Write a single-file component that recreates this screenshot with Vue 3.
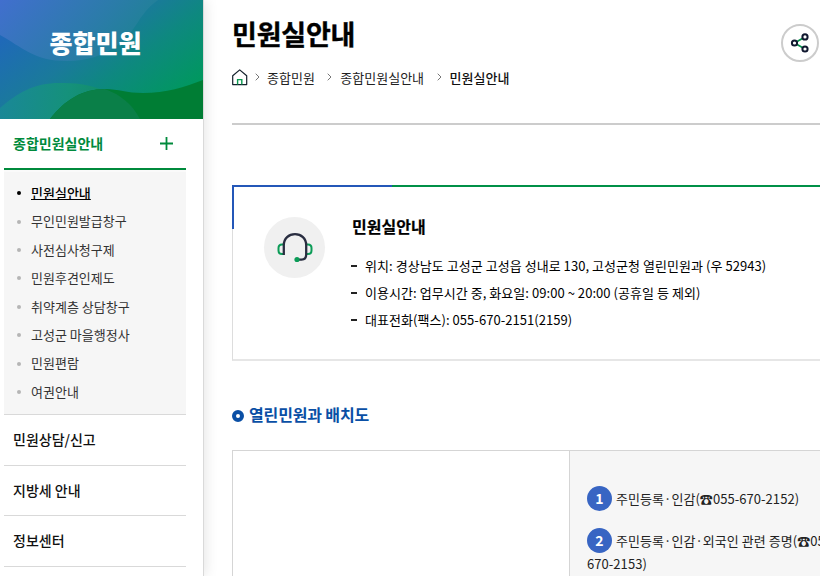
<script setup>
import { ref } from 'vue'

const subMenus = ref([
  '민원실안내',
  '무인민원발급창구',
  '사전심사청구제',
  '민원후견인제도',
  '취약계층 상담창구',
  '고성군 마을행정사',
  '민원편람',
  '여권안내'
])
const menus = ref(['민원상담/신고', '지방세 안내', '정보센터'])
const current = ref('민원실안내')
const opened = ref(true)

const crumbs = ['종합민원', '종합민원실안내', '민원실안내']

const infos = [
  '위치: 경상남도 고성군 고성읍 성내로 130, 고성군청 열린민원과 (우 52943)',
  '이용시간: 업무시간 중, 화요일: 09:00 ~ 20:00 (공휴일 등 제외)',
  '대표전화(팩스): 055-670-2151(2159)'
]

const desks = [
  { name: '주민등록·인감', tel: '055-670-2152' },
  { name: '주민등록·인감·외국인 관련 증명', tel: '055-670-2153' }
]
</script>

<template>
  <div class="page">
    <aside class="side">
      <div class="banner">
        <svg class="waves" viewBox="0 0 203 119" preserveAspectRatio="none">
          <defs>
            <linearGradient id="base" gradientUnits="userSpaceOnUse" x1="0" y1="0" x2="109" y2="100">
              <stop offset="0" stop-color="#416fce" />
              <stop offset="0.6" stop-color="#2a7ca8" />
              <stop offset="1" stop-color="#1a858b" />
            </linearGradient>
            <linearGradient id="left" gradientUnits="userSpaceOnUse" x1="0" y1="0" x2="109" y2="146">
              <stop offset="0.18" stop-color="#1f69b8" />
              <stop offset="0.5" stop-color="#1a7a9b" />
              <stop offset="0.7" stop-color="#0e8880" />
              <stop offset="1" stop-color="#019760" />
            </linearGradient>
            <linearGradient id="hill" gradientUnits="userSpaceOnUse" x1="0" y1="90" x2="130" y2="119">
              <stop offset="0" stop-color="#1a8799" />
              <stop offset="0.5" stop-color="#15917b" />
              <stop offset="1" stop-color="#0e8a5a" />
            </linearGradient>
          </defs>
          <rect width="203" height="119" fill="url(#base)" />
          <path d="M0 35C22 47 34 61 67 61C108 61 128 38 138 22C145 11 151 5 158 0H203V119H0Z" fill="url(#left)" />
          <path d="M0 108C18 93 33 83 60 83C94 82 121 94 140 119H0Z" fill="url(#hill)" />
          <path d="M50 119C65 100 82 89 105 89C119 89 126 93 143 93C166 93 185 87 203 80V119Z" fill="#007d34" />
          <path d="M50 119C65 100 82 89 105 89C121 95 132 104 140 119Z" fill="#0a7f48" />
        </svg>
        <h2>종합민원</h2>
      </div>
      <nav class="menu">
        <button class="menu-open" @click="opened = !opened">
          <span>종합민원실안내</span>
          <svg width="13" height="13" viewBox="0 0 13 13">
            <path d="M6.5 0V13M0 6.5H13" stroke="#008a3c" stroke-width="1.8" />
          </svg>
        </button>
        <ul v-if="opened" class="sub">
          <li v-for="item in subMenus" :key="item" :class="{ on: item === current }" @click="current = item">
            <span>{{ item }}</span>
          </li>
        </ul>
        <a v-for="item in menus" :key="item" class="menu-item">{{ item }}</a>
      </nav>
    </aside>

    <main>
      <header>
        <div class="head-text">
          <h1>민원실안내</h1>
          <div class="crumbs">
            <svg class="home" width="16" height="17" viewBox="0 0 16 17">
              <path d="M0.7 6.8L7.7 0.9L14.7 6.8V15.6H0.7Z" fill="none" stroke="#14202c" stroke-width="1.2" stroke-linejoin="round" />
              <path d="M5.6 15.4V10.6H9.8V15.4" fill="none" stroke="#0b9a51" stroke-width="1.4" />
            </svg>
            <template v-for="crumb in crumbs" :key="crumb">
              <svg class="arrow" width="5" height="8" viewBox="0 0 5 8">
                <path d="M0.7 0.7L4 4L0.7 7.3" fill="none" stroke="#777" stroke-width="1" />
              </svg>
              <span>{{ crumb }}</span>
            </template>
          </div>
        </div>
        <button class="share">
          <svg width="20" height="20" viewBox="0 0 20 20" fill="none">
            <path d="M4.5 10L15 4M4.5 10L15 16" stroke="#07914b" stroke-width="1.8" />
            <g fill="#fff" stroke="#10182f" stroke-width="2">
              <circle cx="4.5" cy="10" r="2.6" />
              <circle cx="15" cy="3.9" r="2.6" />
              <circle cx="15" cy="16" r="2.6" />
            </g>
          </svg>
        </button>
      </header>

      <section class="card">
        <div class="icon">
          <svg width="36" height="32" viewBox="0 0 36 32" fill="none">
            <g stroke="#0b9c57" stroke-width="2">
              <path d="M6.5 12.5H5Q1.5 12.5 1.5 16V18.5Q1.5 22 5 22H6.5" />
              <path d="M29.5 12.5H31Q34.5 12.5 34.5 16V18.5Q34.5 22 31 22H29.5" />
            </g>
            <path d="M6.8 23V13.2C6.8 6.5 11.8 2.2 18 2.2S29.2 6.5 29.2 13.2V22.5Q29.2 27.6 24.5 27.6H20" stroke="#292d40" stroke-width="2.3" />
            <circle cx="20" cy="27.5" r="2.6" fill="#0b9c57" />
          </svg>
        </div>
        <div class="card-text">
          <h3>민원실안내</h3>
          <ul>
            <li v-for="info in infos" :key="info">{{ info }}</li>
          </ul>
        </div>
      </section>

      <h4>열린민원과 배치도</h4>

      <section class="layout">
        <div class="map"></div>
        <ol>
          <li v-for="(desk, i) in desks" :key="desk.tel">
            <b>{{ i + 1 }}</b>{{ desk.name }}(☎{{ desk.tel }})
          </li>
        </ol>
      </section>
    </main>
  </div>
</template>

<style>
body {
  background: #fff;
  overflow: hidden;
}
</style>

<style scoped>
*,
*::before {
  box-sizing: border-box;
  margin: 0;
  padding: 0;
}
.page {
  display: flex;
  width: 820px;
  height: 576px;
  overflow: hidden;
  font-family: "Noto Sans CJK KR", sans-serif;
  font-size: 13px;
  color: #222;
}
ul,
ol {
  list-style: none;
}
button {
  font: inherit;
  background: none;
  border: none;
  cursor: pointer;
}
.side {
  flex: none;
  width: 204px;
  border-right: 1px solid #d9d9d9;
  box-shadow: 2px 0 12px rgba(0, 0, 0, 0.1);
}
.banner {
  position: relative;
  height: 119px;
  padding-top: 24px;
}
.waves {
  position: absolute;
  top: 0;
  left: 0;
  width: 100%;
  height: 100%;
}
h2 {
  position: relative;
  padding-right: 12px;
  text-align: center;
  font-size: 25px;
  font-weight: 900;
  line-height: 36px;
  color: #fff;
}
.menu {
  width: 182px;
  margin-left: 4px;
}
.menu-open {
  display: flex;
  justify-content: space-between;
  align-items: center;
  width: 100%;
  height: 51px;
  padding: 0 13px 0 9px;
  border-bottom: 2px solid #008a3c;
  font-size: 14px;
  font-weight: 700;
  color: #008a3c;
}
.menu-open span {
  margin-top: -2px;
}
.sub {
  height: 245px;
  padding-top: 7px;
  background: #f6f6f6;
  border-top: 2px solid #fafafa;
  border-bottom: 1px solid #d9d9d9;
}
.sub li {
  display: flex;
  align-items: center;
  gap: 10px;
  height: 28.4px;
  padding-left: 13px;
  color: #333;
  cursor: pointer;
}
.sub li span {
  margin-top: -1.4px;
}
.sub li::before {
  content: "";
  width: 4px;
  height: 4px;
  border-radius: 50%;
  background: #b5b5b5;
}
.sub .on {
  color: #000;
  font-weight: 500;
  text-decoration: underline;
}
.sub .on::before {
  background: #000;
}
.menu-item {
  display: block;
  height: 50.5px;
  padding-left: 9px;
  border-bottom: 1px solid #d9d9d9;
  font-size: 14px;
  font-weight: 500;
  line-height: 49.6px;
  color: #111;
}
main {
  flex: none;
  width: 700px;
  padding-left: 28px;
}
header {
  display: flex;
  height: 125px;
  border-bottom: 2px solid #ccc;
}
.head-text {
  width: 549px;
}
h1 {
  padding-top: 15px;
  font-size: 27px;
  font-weight: 700;
  line-height: 38px;
  letter-spacing: -0.2px;
  color: #000;
  -webkit-text-stroke: 0.4px #000;
}
.crumbs {
  display: flex;
  align-items: center;
  height: 20px;
  margin-top: 14px;
}
.arrow {
  margin: 0 8px 0 12.5px;
}
.home + .arrow {
  margin: 0 7px;
}
.crumbs span:last-child {
  font-weight: 500;
  color: #111;
}
.share {
  display: flex;
  align-items: center;
  justify-content: center;
  width: 38px;
  height: 38px;
  margin-top: 24px;
  border: 2px solid #ccc;
  border-radius: 50%;
}
.card {
  position: relative;
  display: flex;
  gap: 26px;
  height: 176px;
  margin-top: 60px;
  padding: 30px 0 0 31px;
  border: 1px solid #ddd;
  border-top: 2px solid #009047;
  border-bottom: 2px solid #e6e6e6;
}
.card::before {
  content: "";
  position: absolute;
  top: -2px;
  left: -1px;
  width: 160px;
  height: 44px;
  border-left: 2px solid #2457b8;
  border-top: 2px solid #2457b8;
}
.icon {
  display: flex;
  align-items: center;
  justify-content: center;
  width: 61px;
  height: 61px;
  border-radius: 50%;
  background: #f0f0f0;
}
.card-text {
  margin-top: -1px;
}
h3 {
  padding-left: 1px;
  font-size: 16px;
  line-height: 20px;
  color: #000;
  -webkit-text-stroke: 0.2px #000;
}
.card-text ul {
  padding-top: 16px;
}
.card-text li {
  display: flex;
  align-items: center;
  gap: 8px;
  height: 27px;
  letter-spacing: 0.05px;
  color: #000;
}
.card-text li::before {
  content: "";
  width: 6px;
  height: 2px;
  background: #222;
}
h4 {
  display: flex;
  align-items: center;
  gap: 5px;
  margin-top: 41px;
  font-size: 16px;
  line-height: 24px;
  letter-spacing: -0.15px;
  color: #0a4fa5;
}
h4::before {
  content: "";
  width: 12px;
  height: 12px;
  margin-top: 3px;
  border: 4px solid #0a4fa5;
  border-radius: 50%;
}
.layout {
  display: flex;
  height: 200px;
  margin-top: 24px;
  border: 1px solid #d5d5d5;
}
.map {
  width: 336px;
}
ol {
  width: 283px;
  padding: 35px 8px 0 17px;
  background: #f6f6f6;
  border-left: 1px solid #d5d5d5;
}
ol li {
  margin-bottom: 17px;
  line-height: 21px;
  letter-spacing: 0.05px;
}
ol b {
  display: inline-block;
  width: 25px;
  height: 25px;
  margin-right: 4px;
  border-radius: 50%;
  background: #3865c3;
  text-align: center;
  font-size: 14px;
  line-height: 25px;
  color: #fff;
}
</style>
